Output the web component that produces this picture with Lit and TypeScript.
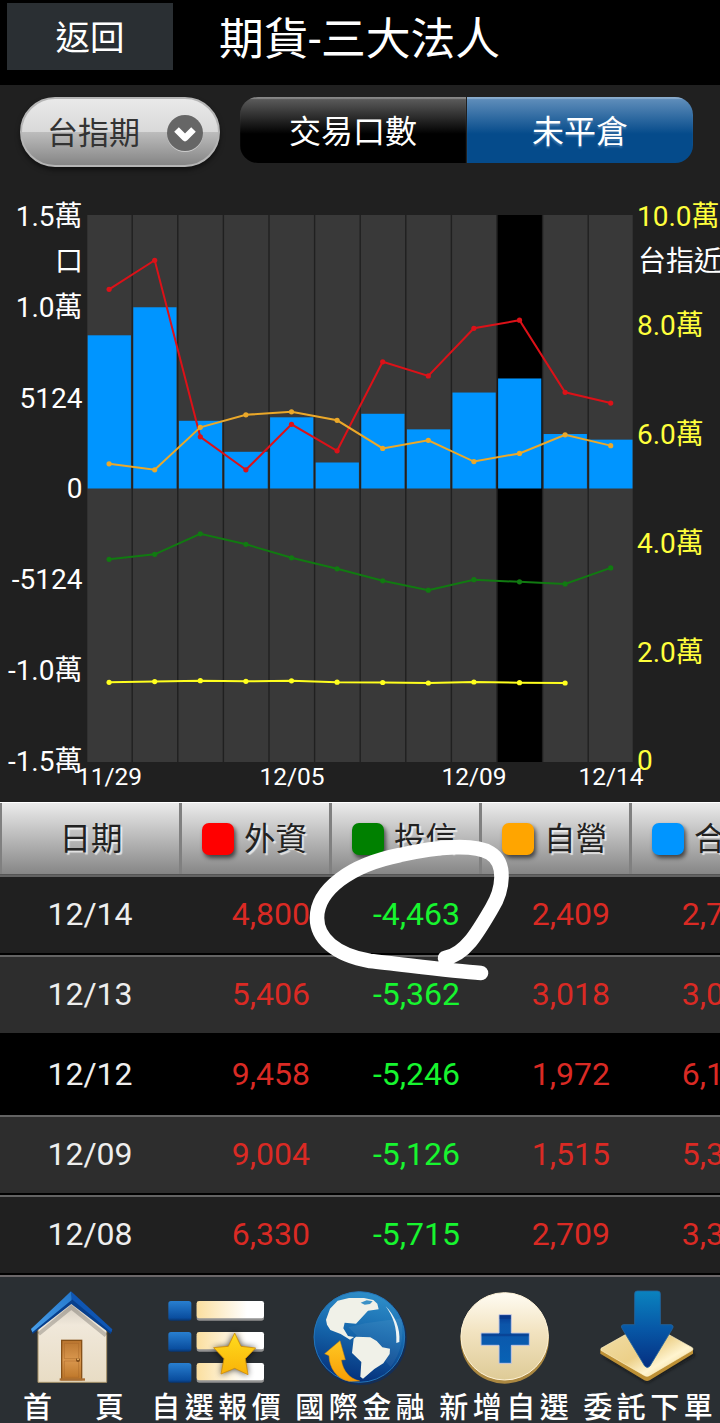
import { LitElement, css, html, svg } from 'lit';
import { customElement, property, state } from 'lit/decorators.js';
import { classMap } from 'lit/directives/class-map.js';

type Row = {
  date: string;
  values: number[];
};

const ROWS: Row[] = [
  { date: '12/14', values: [4800, -4463, 2409, 2746] },
  { date: '12/13', values: [5406, -5362, 3018, 3062] },
  { date: '12/12', values: [9458, -5246, 1972, 6184] },
  { date: '12/09', values: [9004, -5126, 1515, 5393] },
  { date: '12/08', values: [6330, -5715, 2709, 3324] },
];

const FOREIGN = [11197, 12827, 2906, 1051, 3609, 2119, 7122, 6330, 9004, 9458, 5406, 4800];
const TRUST = [-3980, -3699, -2546, -3137, -3896, -4514, -5188, -5715, -5126, -5246, -5362, -4463];
const DEALER = [1388, 1051, 3440, 4143, 4311, 3834, 2250, 2709, 1515, 1972, 3018, 2409];
const TOTAL = [8611, 10186, 3806, 2063, 4002, 1462, 4200, 3324, 5393, 6184, 3062, 2746];
const INDEX = [14570, 14700, 14865, 14755, 14845, 14590, 14535, 14440, 14625, 14500, 14440];

@customElement('futures-chart')
export class FuturesChart extends LitElement {
  static styles = css`
    :host {
      display: block;
    }

    svg {
      display: block;
      font-family: Roboto, 'Noto Sans CJK TC', sans-serif;
      font-size: 28px;
      fill: #fff;
    }

    .right {
      fill: #ffff3c;
    }

    .dates {
      font-size: 24.5px;
      text-anchor: middle;
    }

    .left {
      text-anchor: end;
    }
  `;

  @property({ type: Number })
  selected = 9;

  private left = 87.3;
  private step = 45.6;
  private top = 36;
  private plotHeight = 547;

  // left axis runs from -15372 to 15372
  private y(value: number) {
    return this.top + this.plotHeight / 2 - (value / 15372) * (this.plotHeight / 2);
  }

  // right axis runs from 0 to 100000
  private yIndex(value: number) {
    return this.top + this.plotHeight * (1 - value / 100000);
  }

  private line(ys: number[], color: string) {
    const points = ys.map((y, i) => [this.left + 21.8 + i * this.step, y]);
    return svg`
      <polyline points=${points.map((p) => p.join(',')).join(' ')} fill="none" stroke=${color} stroke-width="2" />
      ${points.map((p) => svg`<circle cx=${p[0]} cy=${p[1]} r="2.6" fill=${color} />`)}
    `;
  }

  render() {
    const leftLabels = ['1.5萬', '1.0萬', '5124', '0', '-5124', '-1.0萬', '-1.5萬'];
    const rightLabels = ['10.0萬', '8.0萬', '6.0萬', '4.0萬', '2.0萬', '0'];
    return html`
      <svg width="720" height="623" viewBox="0 0 720 623">
        <rect x=${this.left} y=${this.top} width="545.4" height=${this.plotHeight} fill="#393939" />
        <rect x=${this.left + this.selected * this.step - 0.6} y=${this.top} width="45.6" height=${this.plotHeight} fill="#000" />
        ${TOTAL.slice(1).map((_, i) => {
          const x = this.left + (i + 1) * this.step - 0.7;
          return svg`<line x1=${x} x2=${x} y1=${this.top} y2=${this.top + this.plotHeight} stroke="#202020" stroke-width="1.4" />`;
        })}
        ${TOTAL.map(
          (value, i) => svg`
            <rect x=${this.left + 0.4 + i * this.step} y=${this.y(value)} width="43.2" height=${this.y(0) - this.y(value)} fill="#0095ff" />
          `
        )}
        ${this.line(FOREIGN.map((v) => this.y(v)), '#dc1118')}
        ${this.line(TRUST.map((v) => this.y(v)), '#117a11')}
        ${this.line(DEALER.map((v) => this.y(v)), '#eba829')}
        ${this.line(INDEX.map((v) => this.yIndex(v)), '#ffff1e')}
        <g class="left">
          ${leftLabels.map((label, i) => svg`<text x="82.5" y=${47.3 + i * 90.7}>${label}</text>`)}
          <text x="83" y="92">口</text>
        </g>
        <g class="right">
          ${rightLabels.map((label, i) => svg`<text x="637" y=${47.3 + i * 108.8}>${label}</text>`)}
        </g>
        <text x="638" y="92">台指近</text>
        <g class="dates">
          <text x="109.5" y="606">11/29</text>
          <text x="292" y="606">12/05</text>
          <text x="474" y="606">12/09</text>
          <text x="611" y="606">12/14</text>
        </g>
      </svg>
    `;
  }
}

const homeIcon = svg`
  <svg width="144" height="108" viewBox="0 60 432 324">
    <defs>
      <linearGradient id="wall" x1="0" y1="0" x2="0" y2="1"><stop offset="0" stop-color="#cfc8bc" /><stop offset=".3" stop-color="#f0e8da" /><stop offset="1" stop-color="#e8dcc4" /></linearGradient>
      <linearGradient id="roof" x1="0" y1="1" x2="1" y2="0"><stop offset="0" stop-color="#4aa0ea" /><stop offset="1" stop-color="#2478cc" /></linearGradient>
      <linearGradient id="door" x1="0" y1="0" x2="0" y2="1"><stop offset="0" stop-color="#b9752f" /><stop offset=".5" stop-color="#d9974e" /><stop offset="1" stop-color="#bc7527" /></linearGradient>
    </defs>
    <path d="M114 200 L214 122 L320 205 V367 H114Z" fill="url(#wall)" stroke="#a8946b" stroke-width="3" />
    <path d="M116 222 L214 142 L318 226" fill="none" stroke="#000" stroke-opacity=".2" stroke-width="12" />
    <path d="M98 222 L93 207 L213 108 L337 209 L332 222 L214 132Z" fill="#073f8c" />
    <path d="M213 94 L337 208 L334 217 L214 116Z" fill="#0f56b4" />
    <path d="M93 207 L213 94 L215 120 L97 217Z" fill="url(#roof)" />
    <rect x="185" y="241" width="60" height="118" fill="url(#door)" stroke="#875118" stroke-width="4" />
    <path d="M193 250H236V296H193ZM193 303H236V352H193Z" fill="none" stroke="#a9662a" stroke-opacity=".6" stroke-width="2.5" />
    <rect x="179" y="355" width="76" height="7" fill="#a96d31" />
    <circle cx="234" cy="300" r="6" fill="#7b4817" />
    <circle cx="234" cy="298" r="3" fill="#efb667" />
  </svg>
`;

const listIcon = svg`
  <svg width="144" height="108" viewBox="432 60 432 324">
    <defs>
      <linearGradient id="tile" x1="0" y1="0" x2="0" y2="1"><stop offset="0" stop-color="#287fd0" /><stop offset=".85" stop-color="#0a4e9f" /><stop offset="1" stop-color="#07346f" /></linearGradient>
      <linearGradient id="bar" x1="0" y1="0" x2="1" y2="0"><stop offset="0" stop-color="#fbdf9f" /><stop offset=".75" stop-color="#fff" /></linearGradient>
      <linearGradient id="gold" x1="0" y1="0" x2="0" y2="1"><stop offset="0" stop-color="#ffdc1e" /><stop offset="1" stop-color="#f9b208" /></linearGradient>
      <filter id="soft" x="-50%" y="-50%" width="200%" height="200%"><feGaussianBlur stdDeviation="9" /></filter>
    </defs>
    ${[123, 216, 309].map(
      (y) => svg`
        <rect x="505" y=${y} width="69" height="59" rx="8" fill="url(#tile)" />
        <rect x="590" y=${y + 5} width="202" height="54" rx="8" fill="#929292" />
        <rect x="590" y=${y} width="202" height="52" rx="7" fill="url(#bar)" />
      `
    )}
    <path d="M704 215 L724 258 L770 264 L737 296 L745 347 L704 326 L662 345 L672 296 L638 264 L684 259Z" fill="#000" opacity=".7" filter="url(#soft)" />
    <path d="M704 219 L723 259 L767 264 L736 296 L744 344 L704 325 L663 342 L672 296 L641 263 L685 259Z" fill="url(#gold)" stroke="#d08d09" stroke-width="2.5" stroke-linejoin="round" />
  </svg>
`;

const globeIcon = svg`
  <svg width="144" height="108" viewBox="24 60 432 324">
    <defs>
      <linearGradient id="sea" x1=".6" y1="0" x2=".4" y2="1"><stop offset="0" stop-color="#2f8fc9" /><stop offset=".45" stop-color="#1668ad" /><stop offset="1" stop-color="#042e79" /></linearGradient>
      <linearGradient id="arrow" x1="0" y1="0" x2="0" y2="1"><stop offset="0" stop-color="#ffc823" /><stop offset="1" stop-color="#f79d05" /></linearGradient>
    </defs>
    <circle cx="241" cy="236" r="139" fill="#0a2d66" opacity=".7" />
    <circle cx="238" cy="231" r="136" fill="url(#sea)" stroke="#2476b9" stroke-width="3" />
    <path d="M255 190 L364 175 Q378 260 332 321 Q290 270 250 245 L205 202Z" fill="#fff" opacity=".06" />
    <path d="M138 179 L150 146 L173 122 L207 114 H252 L280 120 L292 131 L296 148 L264 152 L228 191 L194 188 L190 205 L204 228 L222 231 L210 239 L182 222 L151 210 L141 194Z" fill="#f0f1e8" />
    <path d="M242 128 L260 121 L278 124 L270 132 L254 134Z" fill="#3b91c6" />
    <path d="M221 236 L228 230 L271 232 L290 243 L307 262 L330 266 L329 282 L310 310 L283 327 L249 356 L241 350 L244 306 L216 279Z" fill="#f0f1e8" />
    <path d="M317 139 C344 166 362 205 358 246 L349 249 C351 202 340 171 317 139Z" fill="#eef4f4" />
    <path d="M180 242 L134 281 L147 287 C148 324 169 355 207 364 L239 363 C208 355 190 335 184 300 L196 299Z" fill="url(#arrow)" stroke="#df8b07" stroke-width="1.5" />
  </svg>
`;

const addIcon = svg`
  <svg width="144" height="108" viewBox="456 60 432 324">
    <defs>
      <linearGradient id="coin" x1="0" y1="0" x2="0" y2="1"><stop offset="0" stop-color="#fffcf3" /><stop offset=".45" stop-color="#f2e3c0" /><stop offset="1" stop-color="#decb96" /></linearGradient>
      <linearGradient id="plus" x1="0" y1="0" x2="0" y2="1"><stop offset="0" stop-color="#06378e" /><stop offset=".2" stop-color="#0c55a9" /><stop offset="1" stop-color="#0862b5" /></linearGradient>
    </defs>
    <circle cx="674" cy="238" r="133" fill="#ab8841" />
    <circle cx="674" cy="229" r="131" fill="url(#coin)" stroke="#fff3d7" stroke-width="3" />
    <path d="M657 164H694V219H748V256H694V310H657V256H603V219H657Z" fill="url(#plus)" stroke="#c6c7df" stroke-width="3" />
    <path d="M659 166H692V177H659ZM605 221H746V229H605Z" fill="#073080" opacity=".5" />
  </svg>
`;

const orderIcon = svg`
  <svg width="144" height="108" viewBox="48 60 432 324">
    <defs>
      <linearGradient id="plate" x1="0" y1="0" x2="1" y2="1"><stop offset="0" stop-color="#f2e0ac" /><stop offset=".5" stop-color="#ecd089" /><stop offset=".7" stop-color="#fff4cf" /><stop offset="1" stop-color="#e8c672" /></linearGradient>
      <linearGradient id="down" x1="0" y1="0" x2="0" y2="1"><stop offset="0" stop-color="#0a83bf" /><stop offset=".5" stop-color="#0757a6" /><stop offset="1" stop-color="#052f80" /></linearGradient>
      <filter id="shade" x="-30%" y="-30%" width="160%" height="160%"><feGaussianBlur stdDeviation="5" /></filter>
    </defs>
    <path d="M128 290 L262 370 L405 288 L400 275Z" fill="#111" opacity=".6" filter="url(#shade)" />
    <path d="M121 268 V281 L253 361 Q261 365 269 361 L399 281 V267Z" fill="#bd9035" />
    <path d="M123 265 L253 192 Q261 188 269 192 L397 263 Q401 267 397 271 L268 347 Q261 351 254 347 L123 271Z" fill="url(#plate)" stroke="#fff3c9" stroke-width="2" />
    <path d="M232 93H292Q301 93 301 101V194H333Q342 196 338 205L270 318Q262 327 254 318L186 205Q181 196 190 194H224V101Q224 93 232 93Z" fill="url(#down)" stroke="#23649f" stroke-width="2.5" />
  </svg>
`;

@customElement('app-root')
export class AppRoot extends LitElement {
  static styles = css`
    * {
      margin: 0;
      padding: 0;
      box-sizing: border-box;
    }

    :host {
      display: block;
      position: relative;
      width: 720px;
      height: 1423px;
      overflow: hidden;
      background-color: #202020;
      color: #fff;
      font-family: Roboto, 'Noto Sans CJK TC', sans-serif;
    }

    button {
      appearance: none;
      border: none;
      outline: none;
      font-family: inherit;
      color: #fff;
    }

    header {
      display: flex;
      height: 85px;
      padding: 3px 7px 0;
      background-color: #000;
    }

    .back {
      width: 166px;
      height: 67px;
      padding-bottom: 4px;
      background-color: #2a2f33;
      font-size: 34.5px;
    }

    h1 {
      margin-left: 46px;
      line-height: 73px;
      font-size: 44.8px;
      font-weight: 400;
      white-space: nowrap;
    }

    .toolbar {
      display: flex;
      height: 94px;
      padding: 12px 20px 0;
      gap: 20px;
    }

    .picker {
      display: flex;
      align-items: center;
      justify-content: space-between;
      width: 200px;
      height: 70px;
      padding: 0 14px 0 25px;
      border: 2px solid #b5b5b5;
      border-radius: 35px;
      background: linear-gradient(#e9e9e9, #d9d9d9 50%, #bdbdbd 50%, #858585);
      box-shadow: 0 3px 5px rgba(0, 0, 0, 0.5);
      color: #333;
      font-size: 31px;
    }

    .picker span {
      padding-bottom: 3px;
    }

    .picker svg {
      display: block;
      margin-top: 2px;
    }

    .tabs {
      display: flex;
      gap: 1px;
      width: 453px;
      height: 66px;
      border-radius: 18px;
      overflow: hidden;
    }

    .tabs button {
      flex: 1;
      background: linear-gradient(#606060, #000 56%);
      box-shadow: inset 0 2px 1px rgba(255, 255, 255, 0.25);
      font-size: 32px;
      padding-bottom: 3px;
    }

    .tabs .active {
      background: linear-gradient(#6491bd, #054b8b 56%);
      text-shadow: 0 2px 2px rgba(160, 190, 220, 0.35);
    }

    .table {
      overflow: hidden;
    }

    .head,
    .row {
      display: grid;
      grid-template-columns: 180px repeat(4, 150px);
      width: 780px;
      align-items: center;
    }

    .head {
      height: 73px;
      background: linear-gradient(#ebebeb, #868686);
      border-top: 1px solid #fff;
      border-bottom: 1px solid #555;
      color: #222;
      font-size: 31.5px;
      text-shadow: 2px 2px 1px rgba(255, 255, 255, 0.7);
    }

    .head > div {
      display: flex;
      align-items: center;
      gap: 10px;
      height: 100%;
      padding-left: 20px;
      border-left: 3px solid #808080;
      margin-left: -1px;
    }

    .head > .date {
      justify-content: center;
      padding: 0;
    }

    .head span {
      padding-bottom: 5px;
    }

    .chip {
      width: 32px;
      height: 32px;
      border-radius: 7px;
      box-shadow: 2px 3px 4px rgba(0, 0, 0, 0.6);
    }

    .foreign {
      background-color: #f00;
    }

    .trust {
      background-color: #008000;
    }

    .dealer {
      background-color: #ffa500;
    }

    .total {
      background-color: #0095ff;
    }

    .row {
      height: 80px;
      padding-bottom: 2px;
      border-top: 2px solid #636363;
      border-bottom: 2px solid #000;
      background-color: #202020;
      font-size: 32px;
      text-align: right;
    }

    .row:nth-child(odd) {
      background-color: #2d2d2d;
    }

    .row.selected {
      border-top-color: #000;
      background-color: #000;
    }

    .row .date {
      color: #eee;
      text-align: center;
    }

    .value {
      padding-right: 20px;
      color: #da2a24;
    }

    .value.negative {
      color: #17f52f;
    }

    nav {
      display: flex;
      height: 148px;
      padding-top: 3px;
      border-top: 2px solid #6b6769;
      background-color: #2a2f33;
    }

    nav a {
      display: flex;
      flex-direction: column;
      align-items: center;
      width: 144px;
    }

    nav svg {
      flex: none;
      display: block;
    }

    nav span {
      margin-right: -4.5px;
      line-height: 41px;
      font-size: 29px;
      font-weight: 500;
      letter-spacing: 4.5px;
      white-space: pre;
    }

    .home {
      display: flex;
      gap: 43px;
      padding-left: 3px;
    }

    .scribble {
      position: absolute;
      left: 300px;
      top: 830px;
    }
  `;

  @state()
  private selected = '12/12';

  @state()
  private tab = 1;

  render() {
    return html`
      <header>
        <button class="back">返回</button>
        <h1>期貨-三大法人</h1>
      </header>
      <div class="toolbar">
        <button class="picker">
          <span>台指期</span>
          <svg width="38" height="38" viewBox="0 0 38 38">
            <circle cx="19" cy="20" r="18" fill="#ccc" />
            <circle cx="19" cy="19" r="18" fill="#666" />
            <path d="M10.5 15.5 L19 24 L27.5 15.5" fill="none" stroke="#fff" stroke-width="6.5" stroke-linejoin="round" />
          </svg>
        </button>
        <div class="tabs">
          ${['交易口數', '未平倉'].map(
            (name, i) => html`
              <button class=${classMap({ active: this.tab === i })} @click=${() => (this.tab = i)}>${name}</button>
            `
          )}
        </div>
      </div>
      <futures-chart></futures-chart>
      <div class="table">
        <div class="head">
          <div class="date"><span>日期</span></div>
          <div><i class="chip foreign"></i><span>外資</span></div>
          <div><i class="chip trust"></i><span>投信</span></div>
          <div><i class="chip dealer"></i><span>自營</span></div>
          <div><i class="chip total"></i><span>合計</span></div>
        </div>
        ${ROWS.map(
          (row) => html`
            <div
              class=${classMap({ row: true, selected: row.date === this.selected })}
              @click=${() => (this.selected = row.date)}
            >
              <div class="date">${row.date}</div>
              ${row.values.map(
                (value) => html`
                  <div class=${classMap({ value: true, negative: value < 0 })}>${value.toLocaleString('en-US')}</div>
                `
              )}
            </div>
          `
        )}
      </div>
      <nav>
        <a>${homeIcon}<div class="home"><span>首</span><span>頁</span></div></a>
        <a>${listIcon}<span>自選報價</span></a>
        <a>${globeIcon}<span>國際金融</span></a>
        <a>${addIcon}<span>新增自選</span></a>
        <a>${orderIcon}<span>委託下單</span></a>
      </nav>
      <svg class="scribble" width="220" height="160" viewBox="300 830 220 160">
        <path
          d="M481 973 C450 971 400 964 370 961 C335 955 317 938 317 918 C317 890 350 865 400 855 C440 846 475 844 490 853 C507 863 503 890 492 908 C478 932 465 955 445 958"
          fill="none"
          stroke="#fff"
          stroke-width="14.6"
          stroke-linecap="round"
          stroke-linejoin="round"
        />
      </svg>
    `;
  }
}
